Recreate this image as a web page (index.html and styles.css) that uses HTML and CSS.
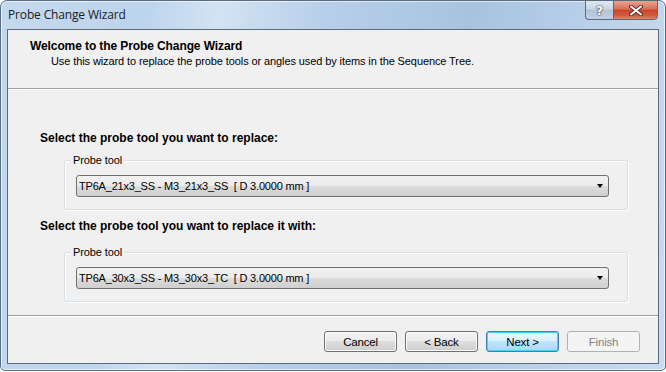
FILE: index.html
```
<!DOCTYPE html>
<html>
<head>
<meta charset="utf-8">
<link rel="stylesheet" href="styles.css">
</head>
<body>
<div class="window">
  <div class="titlebar">
    <span class="title">Probe Change Wizard</span>
    <div class="caption-btns">
      <div class="cbtn help"><span>?</span></div>
      <div class="cbtn close">
        <svg width="14" height="11" viewBox="0 0 14 11"><path d="M2 1.5 L12 9.5 M12 1.5 L2 9.5" stroke="#5a2a1e" stroke-width="3.8" stroke-linecap="round"/><path d="M2 1.5 L12 9.5 M12 1.5 L2 9.5" stroke="#ffffff" stroke-width="2" stroke-linecap="round"/></svg>
      </div>
    </div>
  </div>
  <div class="client">
    <div class="header">
      <div class="h-title">Welcome to the Probe Change Wizard</div>
      <div class="h-sub">Use this wizard to replace the probe tools or angles used by items in the Sequence Tree.</div>
    </div>
    <div class="content">
      <div class="section">
        <div class="sec-label">Select the probe tool you want to replace:</div>
        <div class="group">
          <div class="legend">Probe tool</div>
          <div class="combo"><span>TP6A_21x3_SS - M3_21x3_SS&nbsp; [ D 3.0000 mm ]</span><i class="arrow"></i></div>
        </div>
      </div>
      <div class="section second">
        <div class="sec-label">Select the probe tool you want to replace it with:</div>
        <div class="group">
          <div class="legend">Probe tool</div>
          <div class="combo"><span>TP6A_30x3_SS - M3_30x3_TC&nbsp; [ D 3.0000 mm ]</span><i class="arrow"></i></div>
        </div>
      </div>
    </div>
    <div class="footer">
      <button class="btn">Cancel</button>
      <button class="btn">&lt; Back</button>
      <button class="btn default">Next &gt;</button>
      <button class="btn disabled">Finish</button>
    </div>
  </div>
</div>
</body>
</html>
```
FILE: styles.css
```
* { box-sizing: border-box; }
html, body { margin: 0; padding: 0; background: #ffffff; }
body { width: 666px; height: 372px; overflow: hidden; font-family: "Liberation Sans", Arial, sans-serif; }

.window {
  width: 666px;
  height: 371px;
  border: 1px solid #5a6d82;
  border-radius: 7px 7px 5px 5px;
  background: linear-gradient(100deg, #c4d9ee 0%, #bcd4ec 20%, #d2e3f3 30%, #b7cfe8 45%, #a9c3df 65%, #bcd3ea 85%, #c9dcef 100%);
  box-shadow: inset 0 0 0 1px rgba(255,255,255,0.6);
  display: flex;
  flex-direction: column;
  padding: 0 6px 6px 6px;
}

.titlebar {
  height: 28px;
  display: flex;
  align-items: flex-start;
  justify-content: space-between;
  flex: none;
}
.title {
  font-family: "Open Sans", "Noto Sans", sans-serif;
  font-size: 12px;
  line-height: 16px;
  color: #1a1a1a;
  padding: 6px 0 0 1px;
  letter-spacing: -0.15px;
}
.caption-btns { display: flex; margin-top: -1px; margin-right: 1px; }
.cbtn {
  height: 20px;
  border: 1px solid #5a6a7e;
  display: flex; align-items: center; justify-content: center;
}
.help {
  width: 28px;
  border-radius: 0 0 0 4px;
  border-right: none;
  background: linear-gradient(#dfe7f0 0%, #cad6e3 45%, #b3c3d6 50%, #c2d1e2 100%);
  font-family: "DejaVu Sans", sans-serif;
  font-size: 13px;
  font-weight: bold;
  color: #ffffff;
  text-shadow: 0 0 2px #333, 0 0 1px #222;
}
.close {
  width: 45px;
  border-radius: 0 0 4px 0;
  background: linear-gradient(#e9a28f 0%, #d9715a 45%, #c7452a 50%, #d25a3c 80%, #e08a6c 100%);
}

.client {
  flex: 1;
  border: 1px solid #5c6b7c;
  background: #f0f0f0;
  display: flex;
  flex-direction: column;
  font-size: 11px;
  color: #000;
}

.header {
  height: 59px;
  padding: 9px 0 0 22px;
  border-bottom: 1px solid #a0a0a0;
  box-shadow: 0 1px 0 #ffffff;
  flex: none;
}
.h-title { font-weight: bold; font-size: 12px; line-height: 14px; letter-spacing: -0.1px; }
.h-sub { padding-left: 21px; margin-top: 2px; font-size: 11px; line-height: 13px; letter-spacing: -0.1px; }

.content {
  flex: 1;
  padding: 41px 30px 0 32px;
  border-bottom: 1px solid #a0a0a0;
  box-shadow: 0 1px 0 #ffffff;
}
.section.second { margin-top: 8px; }
.sec-label { font-weight: bold; font-size: 12px; height: 16px; line-height: 16px; }

.group {
  margin: 14px 0 0 24px;
  padding: 0 18px 0 11px;
  border: 1px solid #d5dfe5;
  border-radius: 3px;
  box-shadow: inset 1px 1px 0 #fff, 1px 1px 0 #fff;
  height: 50px;
}
.second .group { margin-top: 18px; }
.legend {
  margin: -8px 0 0 -5px;
  padding: 0 2px;
  width: max-content;
  background: #f0f0f0;
  font-size: 11px;
  line-height: 14px;
  height: 14px;
  letter-spacing: -0.1px;
}
.combo {
  height: 22px;
  margin-top: 8px;
  border: 1px solid #707070;
  border-radius: 3px;
  background: linear-gradient(#f2f2f2 0%, #ebebeb 49%, #dddddd 50%, #cfcfcf 100%);
  display: flex;
  align-items: center;
  justify-content: space-between;
  padding: 0 5px 0 2px;
  font-size: 11px;
  letter-spacing: -0.2px;
}
.arrow {
  width: 0; height: 0;
  border-left: 3.5px solid transparent;
  border-right: 3.5px solid transparent;
  border-top: 4px solid #000;
}

.footer {
  height: 47px;
  flex: none;
  display: flex;
  justify-content: flex-end;
  align-items: flex-start;
  padding: 15px 18px 0 0;
  gap: 8px;
}
.btn {
  width: 73px;
  height: 21px;
  border: 1px solid #707070;
  border-radius: 3px;
  background: linear-gradient(#f2f2f2 0%, #ebebeb 49%, #dddddd 50%, #cfcfcf 100%);
  font-family: "Liberation Sans", Arial, sans-serif;
  font-size: 11.5px;
  letter-spacing: -0.2px;
  color: #000;
  padding: 0;
  box-shadow: inset 0 0 0 1px #fcfcfc;
}
.btn.default {
  border-color: #3c7fb1;
  background: linear-gradient(#eaf6fd 0%, #d9f0fc 49%, #bee6fd 50%, #a7d9f5 100%);
  box-shadow: inset 0 0 0 1px #48d0f8;
}
.btn.disabled {
  border-color: #adb2b5;
  background: #f4f4f4;
  color: #838383;
  box-shadow: none;
}
```
